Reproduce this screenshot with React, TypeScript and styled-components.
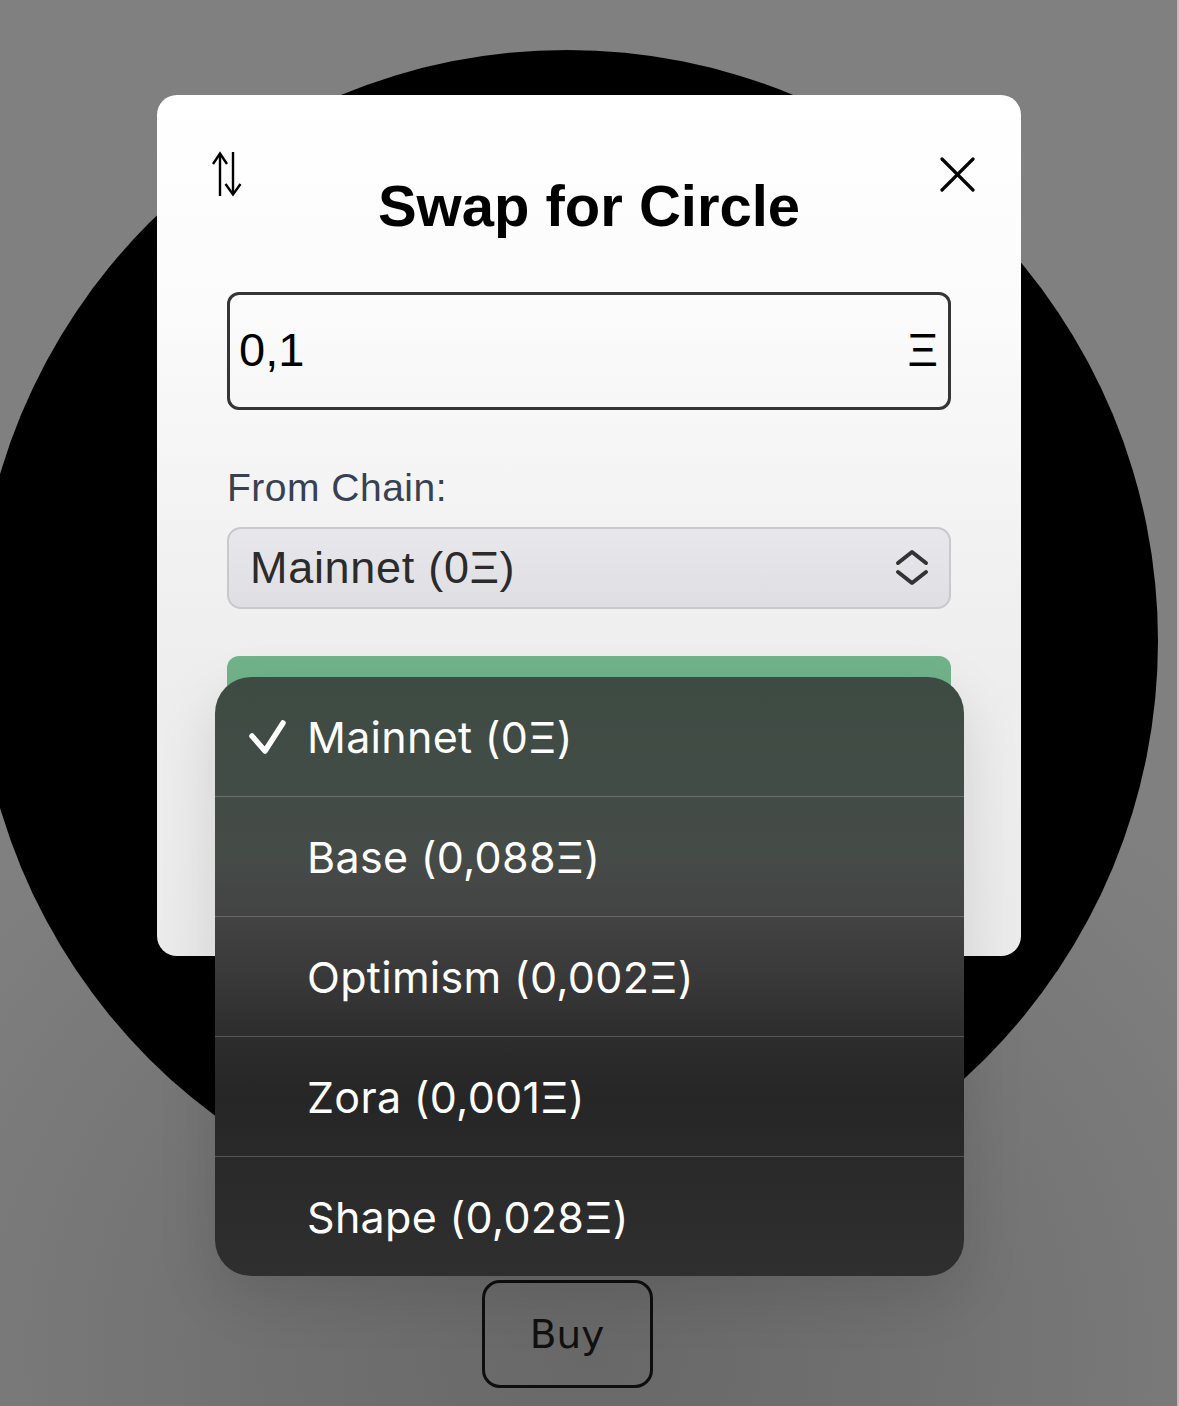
import React from "react";
import styled, { createGlobalStyle } from "styled-components";

const GlobalStyle = createGlobalStyle`
  * { box-sizing: border-box; }
  html, body {
    margin: 0;
    padding: 0;
    width: 1179px;
    height: 1406px;
    overflow: hidden;
    background: #808080;
  }
  #root { width: 1179px; height: 1406px; }
`;

const Page = styled.div`
  position: relative;
  width: 1179px;
  height: 1406px;
  overflow: hidden;
  background: radial-gradient(
    ellipse 800px 700px at 589px 1350px,
    #686868 0%,
    #6f6f6f 35%,
    #808080 100%
  );
  border-right: 2px solid #bdbdbd;
`;

const Gallery = styled.main`
  width: 1134px;
  display: flex;
  flex-direction: column;
  align-items: center;
  padding-top: 50px;
`;

const Artwork = styled.div`
  flex: none;
  width: 1182px;
  height: 1182px;
  margin: 0 -24px;
  border-radius: 50%;
  background: #000;
`;

const BuyButton = styled.button`
  margin-top: 48px;
  width: 171px;
  height: 108px;
  border: 3px solid #0e0e0e;
  border-radius: 18px;
  background: transparent;
  font-family: "DejaVu Sans", Verdana, sans-serif;
  font-size: 39px;
  color: #111;
  padding: 0;
`;

const Modal = styled.section`
  position: absolute;
  left: 157px;
  top: 95px;
  width: 864px;
  height: 861px;
  border-radius: 20px;
  background: linear-gradient(
    180deg,
    #ffffff 0%,
    #fbfbfb 25%,
    #f4f4f4 45%,
    #eeeeee 65%,
    #ebebeb 100%
  );
  padding: 56px 70px 0;
  display: flex;
  flex-direction: column;
  z-index: 1;
`;

const Header = styled.header`
  margin: 0 -24px;
  display: grid;
  grid-template-columns: 1fr auto 1fr;
  align-items: start;
`;

const IconButton = styled.button<{ $side: "start" | "end"; $offset: number }>`
  justify-self: ${(p) => p.$side};
  margin: ${(p) => p.$offset}px 0 0 ${(p) => (p.$side === "start" ? 8 : 0)}px;
  padding: 0;
  border: none;
  background: none;
  display: flex;
  line-height: 0;
`;

const Title = styled.h1`
  margin: 20px 0 0;
  font: bold 58px/1.2 "Liberation Sans", Arial, sans-serif;
  color: #000;
  text-align: center;
  white-space: nowrap;
`;

const AmountBox = styled.label`
  margin-top: 51px;
  height: 118px;
  border: 3px solid #353535;
  border-radius: 12px;
  display: flex;
  align-items: center;
  padding: 0 10px 0 9px;
  font: 47px/1.2 "Liberation Sans", Arial, sans-serif;
  color: #000;
`;

const AmountInput = styled.input`
  flex: 1;
  min-width: 0;
  border: none;
  outline: none;
  background: transparent;
  padding: 0;
  font: inherit;
  color: inherit;
`;

const Unit = styled.span`
  flex: none;
`;

const FieldLabel = styled.div`
  margin-top: 55px;
  font: 39px/1.2 "Liberation Sans", Arial, sans-serif;
  letter-spacing: 0.5px;
  color: #374151;
`;

const ChainSelect = styled.button`
  margin-top: 16px;
  height: 82px;
  border: 2px solid #c8c8cd;
  border-radius: 14px;
  background: linear-gradient(180deg, #e8e8ec 0%, #dfdfe3 100%);
  display: flex;
  align-items: center;
  justify-content: space-between;
  padding: 0 20px 0 21px;
  font: 45px/1.2 "Liberation Sans", Arial, sans-serif;
  letter-spacing: 0.7px;
  color: #2b2b2b;
  text-align: left;
`;

const SwapButton = styled.button`
  margin-top: 47px;
  height: 82px;
  border: none;
  border-radius: 12px;
  background: #71b38a;
`;

const Menu = styled.ul`
  position: absolute;
  left: 215px;
  top: 677px;
  width: 749px;
  margin: 0;
  padding: 0;
  list-style: none;
  border-radius: 36px;
  overflow: hidden;
  z-index: 2;
  background: linear-gradient(
    180deg,
    #3d4b42 0%,
    #424c46 17%,
    #464b48 30%,
    #434343 40%,
    #393939 50%,
    #2d2d2d 60%,
    #262626 70%,
    #2a2a2a 83%,
    #2f2f2f 100%
  );
  box-shadow: 0 20px 60px rgba(0, 0, 0, 0.12);
`;

const MenuItem = styled.li`
  height: 120px;
  display: grid;
  grid-template-columns: 40px 1fr;
  column-gap: 19px;
  align-items: center;
  padding-left: 33px;
  border-bottom: 1px solid rgba(255, 255, 255, 0.2);
  font-family: Inter, "Noto Sans", sans-serif;
  font-size: 43px;
  letter-spacing: 0.3px;
  color: #fff;
  &:last-child {
    height: 119px;
    border-bottom: none;
  }
`;

const CheckSlot = styled.span`
  display: flex;
  line-height: 0;
`;

const SwapIcon = () => (
  <svg width="32" height="46" viewBox="0 0 32 46" fill="none" stroke="#000" strokeWidth="2.4">
    <line x1="9" y1="3" x2="9" y2="45" />
    <polyline points="2,13 9,2.5 16,13" />
    <line x1="22" y1="1" x2="22" y2="43" />
    <polyline points="14.5,33 22,43.5 29.5,33" />
  </svg>
);

const CloseIcon = () => (
  <svg width="36" height="36" viewBox="0 0 36 36" fill="none" stroke="#000" strokeWidth="3.2" strokeLinecap="round">
    <line x1="3" y1="3" x2="34" y2="34" />
    <line x1="34" y1="3" x2="3" y2="34" />
  </svg>
);

const Chevrons = () => (
  <svg width="34" height="38" viewBox="0 0 34 38" fill="none" stroke="#333" strokeWidth="4" strokeLinecap="round" strokeLinejoin="round">
    <polyline points="3,14 17,3 31,14" />
    <polyline points="3,23 17,34 31,23" />
  </svg>
);

const Check = () => (
  <svg width="40" height="36" viewBox="0 0 40 36" fill="none" stroke="#fff" strokeWidth="5.5" strokeLinecap="round" strokeLinejoin="round">
    <polyline points="4,17 17,32 35,4" />
  </svg>
);

const chains = [
  { name: "Mainnet", amount: "0" },
  { name: "Base", amount: "0,088" },
  { name: "Optimism", amount: "0,002" },
  { name: "Zora", amount: "0,001" },
  { name: "Shape", amount: "0,028" },
];

export default function App() {
  const selected = 0;
  return (
    <>
      <GlobalStyle />
      <Page>
        <Gallery>
          <Artwork />
          <BuyButton>Buy</BuyButton>
        </Gallery>

        <Modal>
          <Header>
            <IconButton $side="start" $offset={0} aria-label="Switch direction">
              <SwapIcon />
            </IconButton>
            <Title>Swap for Circle</Title>
            <IconButton $side="end" $offset={5} aria-label="Close">
              <CloseIcon />
            </IconButton>
          </Header>
          <AmountBox>
            <AmountInput value="0,1" readOnly />
            <Unit>Ξ</Unit>
          </AmountBox>
          <FieldLabel>From Chain:</FieldLabel>
          <ChainSelect>
            <span>
              {chains[selected].name} ({chains[selected].amount}Ξ)
            </span>
            <Chevrons />
          </ChainSelect>
          <SwapButton aria-label="Swap" />
        </Modal>

        <Menu>
          {chains.map((c, i) => (
            <MenuItem key={c.name}>
              <CheckSlot>{i === selected ? <Check /> : null}</CheckSlot>
              <span>
                {c.name} ({c.amount}Ξ)
              </span>
            </MenuItem>
          ))}
        </Menu>
      </Page>
    </>
  );
}
